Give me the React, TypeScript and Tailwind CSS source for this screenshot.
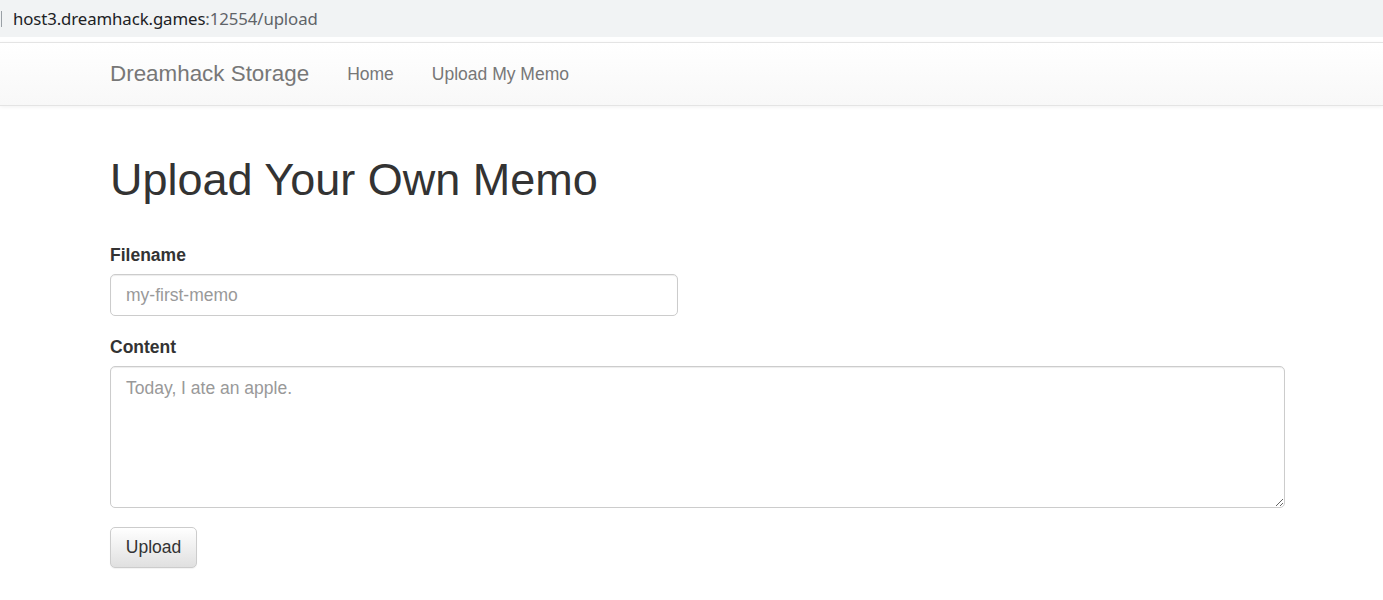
export default function App() {
  return (
    <div className="min-h-[600px] bg-white font-['Liberation_Sans',Arial,sans-serif] text-[#333]">
      {/* address bar */}
      <div className="flex h-[37px] items-center bg-[#f1f3f4]">
        <div className="h-[16px] w-[1px] bg-[#9aa0a6] ml-[1px]" />
        <div className="ml-[11px] font-['Noto_Sans',sans-serif] text-[16.8px] tracking-[-0.1px]">
          <span className="text-[#202124]">host3.dreamhack.games</span>
          <span className="text-[#5f6368]">:12554/upload</span>
        </div>
      </div>
      <div className="h-[5px] bg-white" />

      {/* navbar */}
      <nav className="h-[64px] border-y border-[#e4e4e4] bg-gradient-to-b from-white to-[#f8f8f8] shadow-[0_1px_4px_rgba(0,0,0,0.06)]">
        <div className="flex h-full items-center pl-[110px]">
          <span className="text-[22.4px] text-[#777]">Dreamhack Storage</span>
          <span className="ml-[38px] text-[17.5px] text-[#777]">Home</span>
          <span className="ml-[38px] text-[17.5px] text-[#777]">Upload My Memo</span>
        </div>
      </nav>

      {/* content */}
      <main className="pl-[110px] pr-[98px]">
        <h1 className="mt-[49px] text-[45px] leading-[50px] text-[#333]">Upload Your Own Memo</h1>

        <form className="mt-[38px]">
          <label className="block text-[17.5px] font-bold leading-[24px] text-[#333]">Filename</label>
          <input
            className="mt-[7px] block h-[42px] w-[568px] rounded-[5px] border border-[#ccc] px-[15px] text-[17.5px] shadow-[inset_0_1px_1px_rgba(0,0,0,0.075)] outline-none placeholder:text-[#999]"
            placeholder="my-first-memo"
          />

          <label className="mt-[19px] block text-[17.5px] font-bold leading-[24px] text-[#333]">Content</label>
          <textarea
            className="mt-[7px] block h-[142px] w-full resize-y rounded-[5px] border border-[#ccc] px-[15px] py-[8px] text-[17.5px] shadow-[inset_0_1px_1px_rgba(0,0,0,0.075)] outline-none placeholder:text-[#999]"
            placeholder="Today, I ate an apple."
          />

          <button
            type="button"
            className="mt-[19px] h-[41px] w-[87px] rounded-[5px] border border-[#ccc] bg-gradient-to-b from-white to-[#e0e0e0] text-[17.5px] text-[#333] shadow-[0_1px_1px_rgba(0,0,0,0.05)]"
          >
            Upload
          </button>
        </form>
      </main>
    </div>
  );
}
